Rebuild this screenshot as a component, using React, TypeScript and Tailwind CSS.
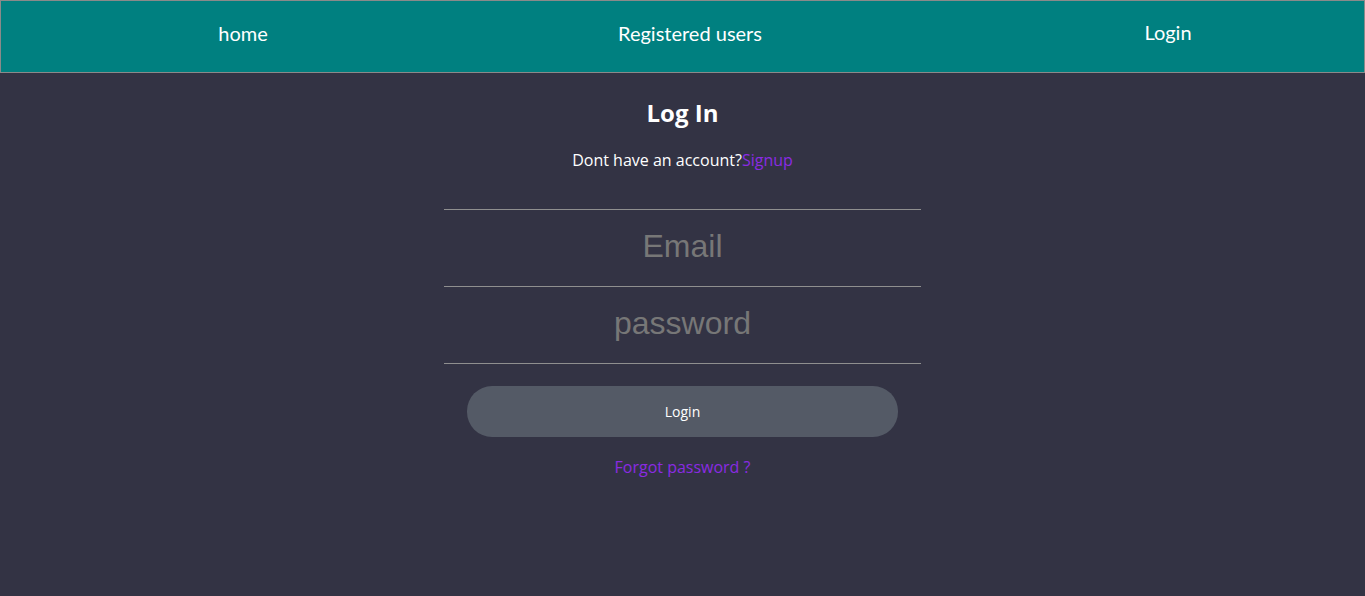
export default function App() {
  return (
    <div className="min-h-[596px] bg-[#333344] font-['Open_Sans',sans-serif]">
      {/* Top navigation */}
      <nav className="flex h-[73px] items-center border border-[#8a8a8a] bg-[#008080] pb-[7px] font-['Lato',sans-serif] text-[20px] text-white">
        <div className="ml-[142px] w-[200px] text-center">home</div>
        <div className="ml-[247px] w-[200px] text-center">Registered users</div>
        <div className="ml-[278px] -mt-[2px] w-[200px] text-center">Login</div>
      </nav>

      {/* Login form */}
      <div className="flex flex-col items-center">
        <h1 className="mt-[24px] text-[24px] leading-[32px] font-bold text-white">Log In</h1>
        <p className="mt-[19px] text-[16px] leading-[24px] text-white">
          Dont have an account?<span className="text-[#8a2be2]">Signup</span>
        </p>

        <div className="mt-[37px] flex w-[477px] flex-col border-t border-[#8f8f8f]">
          <input
            placeholder="Email"
            className="h-[77px] w-full border-b border-[#8f8f8f] bg-transparent pb-[3px] text-center font-['Liberation_Sans',Arial,sans-serif] text-[32px] text-white outline-none placeholder:text-[#777777]"
          />
          <input
            type="password"
            placeholder="password"
            className="h-[77px] w-full border-b border-[#8f8f8f] bg-transparent pb-[3px] text-center font-['Liberation_Sans',Arial,sans-serif] text-[32px] text-white outline-none placeholder:text-[#777777]"
          />
        </div>

        <button className="mt-[22px] h-[51px] w-[431px] rounded-[25px] bg-[#545a66] text-[14px] text-white">
          Login
        </button>

        <a className="mt-[18px] text-[16px] leading-[24px] text-[#8a2be2]">Forgot password ?</a>
      </div>
    </div>
  );
}
